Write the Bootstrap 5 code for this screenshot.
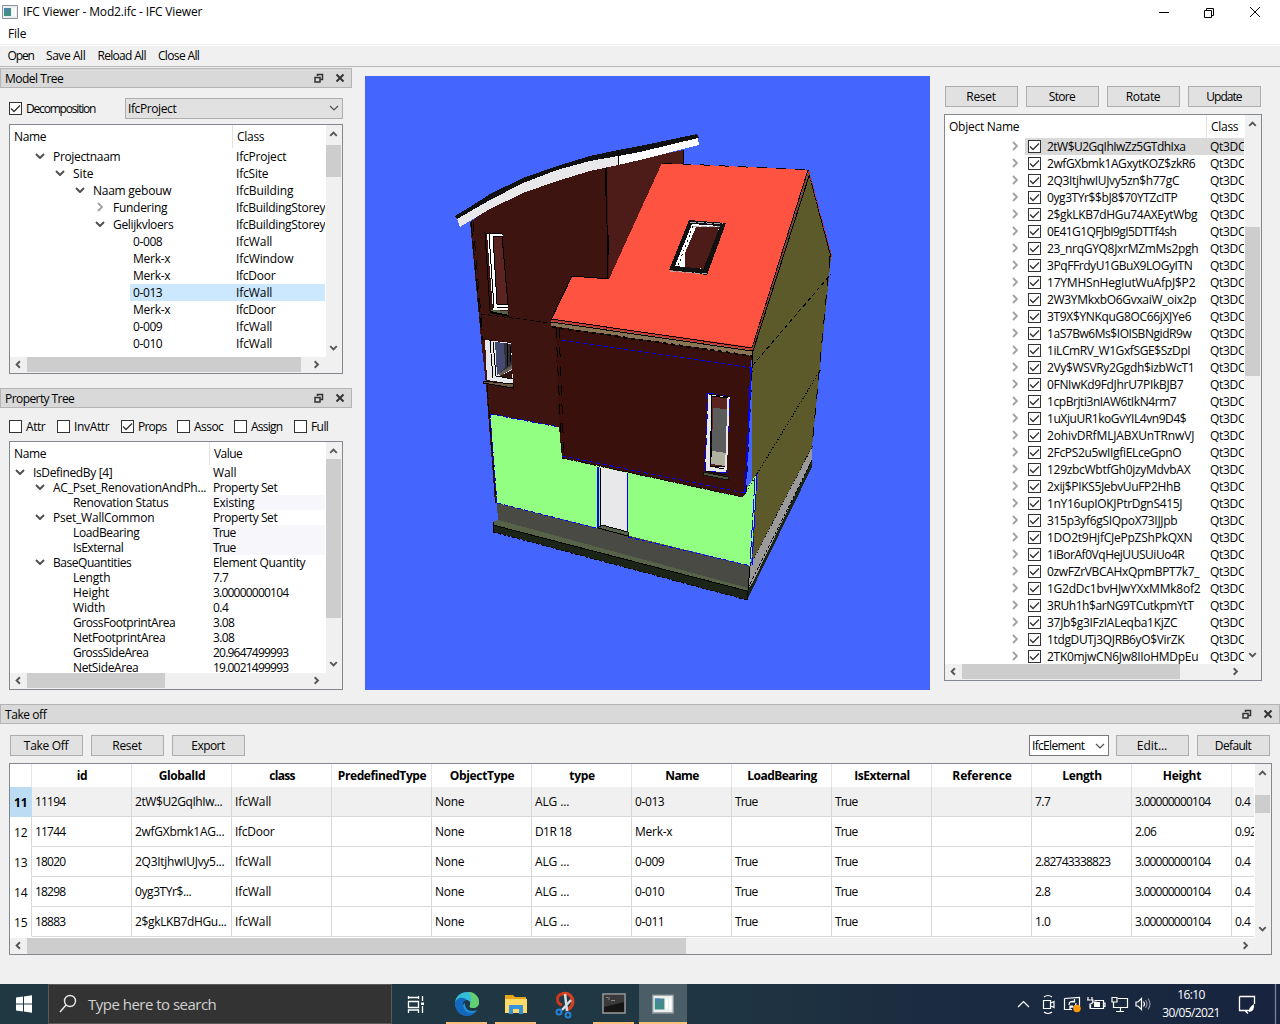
<!DOCTYPE html>
<html lang="en">
<head>
<meta charset="utf-8">
<title>IFC Viewer - Mod2.ifc - IFC Viewer</title>
<link href="https://cdn.jsdelivr.net/npm/bootstrap@5.3.0/dist/css/bootstrap.min.css" rel="stylesheet">
<style>
body{width:1280px;height:1024px;overflow:hidden;background:#f0f0f0;color:#000;font:12px/17px "Open Sans","Noto Sans",sans-serif;letter-spacing:-.2px}
svg{display:block;flex:none}
.titlebar{height:23px;background:#fff;padding:0 19px 0 2px}
.menubar{height:22px;background:#fff;border-bottom:1px solid #f0f0f0;box-shadow:0 1px #fff;padding:2px 8px}
.toolstrip{height:22px;border-bottom:1px solid #b8b8b8;padding-left:7.5px;gap:12.200px}
.work{height:637px}
.leftcol{width:352px}
.docktitle{height:20px;background:#d9d9d9;border:1px solid #b4b4b4;padding:0 6px 0 4px}
.checks{height:36px;padding-left:9px}
.tick{width:13px;height:13px;border:1px solid #333;background:#fff;flex:none}
.lbl{margin-left:4px}
.combo{border:1px solid #adadad;background:#e1e1e1;height:21px;padding:0 3px 0 2px}
.combo.light{background:#fff;border-color:#7a7a7a;width:80px;margin-right:-1px}
.frame{border:1px solid #828790;background:#fff;overflow:hidden}
.vbar,.hbar{background:#f0f0f0;flex:none}
.vbar{width:16px}
.hbar{height:16px}
.thumb{background:#cdcdcd;flex:none}
.arr{flex:none;width:17px;height:17px}
.vbar .arr{width:15px}
.hbar .arr{height:15px}
.r17{height:17px;line-height:17px;white-space:nowrap}
.r15{height:15px;line-height:15px;white-space:nowrap}
.hd{height:23px;line-height:23px}
.hd .c1{border-right:1px solid #e2e2e2;padding-left:4px}
.hd .c2{padding-left:4px}
.c1{flex:none;overflow:hidden}
.c2{flex:1 1 0;min-width:0;overflow:hidden;padding-left:3px;margin-right:1px;white-space:nowrap}
.tw1{width:223px}.tw2{width:200px}.tw3{width:262px}
.exp{width:20px;flex:none;display:flex;justify-content:center;padding:0 1px 1px 0}
.picked{background:#cce8ff}
.push{width:73px;height:21px;line-height:17px;padding:0 1px 0 0;border:1px solid #adadad;background:#e1e1e1;border-radius:0;font-size:12px;letter-spacing:-.2px;color:#000}
.push:hover{background:#e1e1e1}
.scene{width:565px;height:614px;margin:9px 0 0 13px}
.rightcol{width:318px;margin:0 18px 0 14px;padding-top:19px}
.grid-row{height:30px;line-height:30px;white-space:nowrap}
.grid-row>div{width:100px;flex:none;border-right:1px solid #d8d8d8;border-bottom:1px solid #d8d8d8;padding-left:3px;overflow:hidden}
.grid-row>div.num{width:22px;padding-left:4px;border-bottom-color:#fff;line-height:31px}
.grid-row.on>div{background:#f0f0f0}
.grid-row.on>div.num{background:#bcdcf4;border-color:#bcdcf4;font-weight:700}
.grid-row.top{height:23px;line-height:24px;font-weight:700;text-align:center}
.grid-row.top>div{border-bottom:0;padding:0 0 0 1px;border-color:#e5e5e5}
.taskbar{height:40px;background:linear-gradient(90deg,#1f3841,#203744 50%,#1a2b3f 75%,#18243f);color:#fff}
.seek{width:344px;height:40px;background:#333;border:1px solid #5a5a5a;color:#d0d0d0;font-size:15px;letter-spacing:0}
.app{height:40px;display:flex;justify-content:center;align-items:center;border-bottom:2px solid #fec07c;padding-top:2px;width:41px;margin-right:8px}
.clock{width:64px;font-size:12px;line-height:18px;text-align:center}
</style>
<script src="https://cdn.jsdelivr.net/npm/bootstrap@5.3.0/dist/js/bootstrap.bundle.min.js"></script>
</head>
<body class="d-flex flex-column">
<svg width="0" height="0" class="position-absolute">
 <defs>
 <symbol id="dn" viewBox="0 0 10 6"><path d="M1 1 5 5 9 1" fill="none" stroke="#505050" stroke-width="2"/></symbol>
 <symbol id="rt" viewBox="0 0 6 10"><path d="M1 1 5 5 1 9" fill="none" stroke="#a0a0a0" stroke-width="1.8"/></symbol>
 <symbol id="au" viewBox="0 0 16 17"><path d="M4.500 11 8 7.500 11.500 11" fill="none" stroke="#555" stroke-width="2"/></symbol>
 <symbol id="ad" viewBox="0 0 16 17"><path d="M4.500 6 8 9.500 11.500 6" fill="none" stroke="#555" stroke-width="2"/></symbol>
 <symbol id="al" viewBox="0 0 17 16"><path d="M10 4.500 6.500 8 10 11.500" fill="none" stroke="#555" stroke-width="2"/></symbol>
 <symbol id="ar" viewBox="0 0 17 16"><path d="M5.500 4.500 9 8 5.500 11.500" fill="none" stroke="#555" stroke-width="2"/></symbol>
 <symbol id="ck" viewBox="0 0 11 11"><path d="M1 5.500 4 8.500 10 2.500" fill="none" stroke="#333" stroke-width="1.300"/></symbol>
 <symbol id="cv" viewBox="0 0 10 6"><path d="M1 1 5 5 9 1" fill="none" stroke="#505050" stroke-width="1.200"/></symbol>
 <symbol id="wc" viewBox="0 0 31 10"><path d="M3.500 3V1.500H8.500V6.500H6M1 4.500H6V9H1ZM1 4.500H6" fill="none" stroke="#333" stroke-width="1.500"/><path d="M22.500 1.500 29.500 8.500M29.500 1.500 22.500 8.500" stroke="#333" stroke-width="2"/></symbol>
 <symbol id="app" viewBox="0 0 16 16"><path d="M.5 1.500H15.500V14.500H.5Z" fill="#eceeef" stroke="#8d9297"/><path d="M2 4H9V12H2Z" fill="#3f8f86"/><path d="M2 4H6V9Z" fill="#4f7fb5"/><path d="M10 4H11.500V12H10ZM12.500 4H14V12H12.500Z" fill="#fff"/></symbol>
 </defs>
</svg>

<header class="titlebar d-flex align-items-center">
 <svg width="16" height="16"><use href="#app"/></svg>
 <span class="me-auto" style="margin-left:5px" data-w="179">IFC Viewer - Mod2.ifc - IFC Viewer</span>
 <svg width="102" height="14" viewBox="0 3 102 14" fill="none" stroke="#000"><path d="M0 10.500H10M45.500 8.500H52.500V15.500H45.500ZM47.500 8.500V6.500H54.500V13.500H52.500M91 5 101 15M101 5 91 15"/></svg>
</header>
<nav class="menubar"><span data-w="18">File</span></nav>
<div class="toolstrip d-flex align-items-center"><span data-w="26">Open</span><span data-w="39">Save All</span><span data-w="48">Reload All</span><span data-w="41">Close All</span></div>

<main class="work d-flex align-items-start">
 <section class="leftcol">
  <div class="docktitle d-flex align-items-center justify-content-between" style="margin-top:1px"><span data-w="58">Model Tree</span><svg width="31" height="10"><use href="#wc"/></svg></div>
  <div class="checks d-flex align-items-center pt-1"><span class="tick"><svg width="11" height="11"><use href="#ck"/></svg></span><span class="lbl" data-w="69">Decomposition</span>
   <div class="combo d-flex align-items-center justify-content-between ms-auto" style="width:218px;margin-right:9px"><span data-w="48">IfcProject</span><svg width="10" height="6"><use href="#cv"/></svg></div></div>
  <div class="frame d-flex" id="modelTree" style="width:334px;height:250px;margin-left:9px"></div>
  <div class="docktitle d-flex align-items-center justify-content-between" style="margin-top:14px"><span data-w="69">Property Tree</span><svg width="31" height="10"><use href="#wc"/></svg></div>
  <div class="checks d-flex align-items-center" id="filters"></div>
  <div class="frame d-flex" id="propTree" style="width:334px;height:249px;margin:-3px 0 0 9px"></div>
 </section>

 <div class="scene">
 <svg width="565" height="614" viewBox="365 76 565 614" shape-rendering="crispEdges">
  <path fill="#4466ff" d="M365 76H930V690H365Z"/>
  <g id="walls">
  <path fill="#4d1c18" d="M605 166 683 150 684 164 662 164 609 280Z"/>
  <path fill="#3d1410" d="M470 222 490 208 523 192 557 180 590 171 607 167 609 280 556 325 562 458 559 427 490 414 497 503 495 503 486 385 481 339Z"/>
  <path fill="#5c5a2a" d="M808 172 831 257 812 447 752 563 752 350Z"/>
  <path fill="#92ff83" d="M490 414 559 427 562 457 741 497 757 473 751 566 497 503Z"/>
  <path fill="#3a100c" d="M555 324 752 353 751 368 745 494 742 497 562 458 559 427Z"/>
  <path fill="#ff5341" d="M662 163 808 170 752 350 551 320 572 276 609 279Z"/>
  <path fill="#c93430" d="M551 319 752 347V350L551 321Z"/>
  <path fill="#8b7355" d="M551 321 752 350V356L551 326Z"/>
  </g>
  <g id="eaves">
  <path fill="#101010" d="M455 216 470 207 490 194 523 178 557 166 590 156 618 150 640 146 697 134 699 138 640 153 618 158 590 163 557 172 523 185 490 201 458 220Z"/>
  <path fill="#e8e8ea" d="M457 219 490 200 523 183 557 170 590 161 618 156V165L590 171 557 181 523 193 490 209 470 221 460 227Z"/>
  <path fill="#fff" d="M618 156 640 152 698 138 699 145 640 160 618 165Z"/>
  </g>
  <g id="base">
  <path fill="#4a4a44" d="M497 503 750 566 748 590 498 523Z"/>
  <path fill="#566348" d="M493 522 498 520 748 588 747 592 493 525Z"/>
  <path fill="#1c2418" d="M493 525 747 591 812 460V467L747 600 494 532Z"/>
  <path fill="#9a9a9a" d="M750 567 753 560 812 447V460L753 582 749 588Z"/>
  </g>
  <g id="edges" fill="none" stroke="#000">
  <path d="M606 168 608 279M683 150 684 163M572 276 609 279M572 276 551 320M551 322 752 351M551 319 752 348M808 170 752 348M810 173 753 351M808 170 831 257M618 150V165M493 525 747 591V600M750 567 748 590M752 348V360M493 522V532M830 256 829 268M753 352 752 368"/>
  <path d="M606 168V196M608 235V255" stroke-width="1.500"/>
  <path stroke-dasharray="10 9" d="M662 163 808 170M473 222 483 339M556 328 562 458M559 328 564 458M753 352 746 493M830 257 812 447"/>
  <path stroke="#3d1410" stroke-width="2" d="M488 400 496 502"/>
  <path stroke-dasharray="14 5" d="M487 385 496 503M471 222 482 339"/>
  <path stroke-dasharray="4 4" stroke-width="2" d="M552 327 752 356"/>
  <path stroke-dasharray="3 1" d="M562 458 742 497"/>
  <path stroke-dasharray="3 2" d="M493 532 747 600M812 460 748 588"/>
  <path stroke-dasharray="1 2" d="M750 566 812 447"/>
  <path stroke-dasharray="4 3" d="M481 314 551 323M481 339 511 343M753 365 831 274"/>
  <path stroke-dasharray="1 2" d="M745 494 820 370" stroke-width="1.400"/>
  <path stroke="#b52c2a" d="M809 171 752 350M809 172 832 257" stroke-dasharray="3 2"/>
  <path stroke="#00f" stroke-dasharray="4 3" d="M490 414 559 427M490 414 497 503M497 503 600 529M628 537 751 566M562 340 752 368M562 456 745 493"/>
  <path stroke="#00f" stroke-width="1.500" d="M751 368 748 440 745 493M627 473V531M598 467V528"/><path stroke="#00f" stroke-dasharray="18 3" d="M757 473 752 565M755 478 750 565"/>
  </g>
  <g id="windows">
  <path fill="#3d1410" stroke="#000" d="M485 233 502 234 508 312 490 311Z"/><path fill="#fff" d="M487 234 502 234 503 236 493 236 497 304 508 304V310L493 310Z"/><path fill="#5c2420" stroke="#000" d="M493 236 502 236 508 304 497 304Z"/><path stroke="#000" d="M489 234 494 308M497 307H508"/><path fill="#566348" d="M491 310 508 311V315L490 312Z"/><path stroke="#000" stroke-width="2" d="M490 312 509 316"/>
  <path fill="#e8e8ea" d="M485 340 511 343 513 384 487 380Z"/><path fill="#454a70" d="M495 342 505 343 505 368 497 375Z"/><path fill="#303036" d="M504 343 511 344 512 366 498 374 505 367Z"/><path fill="#655b56" d="M498 374 512 365V369L500 376Z"/><path fill="#301414" d="M500 376 512 370V379Z"/><path d="M493 342 496 376 513 379M490 341 493 378M507 344 508 366M510 346 511 362" fill="none" stroke="#000"/><path fill="#6f5a45" stroke="#000" d="M483 381 513 384V388L483 383Z"/>
  <path fill="#111" d="M689 220 726 223 707 275 669 270Z"/><path fill="#fff" d="M692 224 720 226 705 269 675 266Z"/><path fill="#4d1c18" d="M696 227 719 227 706 269 685 267 685 253Z"/><path fill="none" stroke="#aaa" stroke-dasharray="6 2" d="M690 222 723 224M670 271 707 274M693 226 720 227"/><path stroke="#111" stroke-dasharray="2 3" d="M693 226 678 266"/><path stroke="#111" stroke-width="3" d="M722 225 705 269"/>
  <path fill="#e8e8ea" stroke="#00f" stroke-dasharray="9 3" d="M708 393 730 397 726 473 705 471Z"/><path fill="#5c2420" stroke="#000" d="M712 396 728 398 726 467 711 466Z"/><path fill="#5c5c5c" d="M713 408 727 409 726 453 712 451Z"/><path fill="#b0b0a0" d="M712 451 726 453 725 466 711 464Z"/><path stroke="#e8e8ea" stroke-width="2" d="M728.500 398 726 470"/><path fill="none" stroke="#000" d="M709 394 730 397M712 397 710 466M710 466 724 469M706 471 726 475"/><path fill="#4c563f" stroke="#111" d="M703 472 728 477 728 480 703 475Z"/>
  <path fill="#e8e8ea" d="M600 467 627 473V531L601 525Z"/><path stroke="#000" d="M600 467 601 526"/><path fill="none" stroke="#92ff83" d="M599 467V526"/><path fill="#566348" stroke="#000" d="M598 528 602 525 628 532V536Z"/>
  </g>
 </svg>
 </div>

 <aside class="rightcol">
  <div class="d-flex" style="gap:8px;padding-left:1px" id="sceneBtns"></div>
  <div class="frame d-flex" id="objTree" style="height:567px;margin-top:7px"></div>
 </aside>
</main>

<section>
 <div class="docktitle d-flex align-items-center justify-content-between"><span data-w="41">Take off</span><svg width="31" height="10"><use href="#wc"/></svg></div>
 <div class="d-flex align-items-center" style="gap:8px;padding:11px 10px 7px">
  <button class="btn push"><span data-w="44">Take Off</span></button><button class="btn push"><span data-w="29">Reset</span></button><button class="btn push me-auto"><span data-w="33">Export</span></button>
  <div class="combo light d-flex align-items-center justify-content-between"><span data-w="52">IfcElement</span><svg width="10" height="6"><use href="#cv"/></svg></div>
  <button class="btn push"><span data-w="30">Edit...</span></button><button class="btn push"><span data-w="36">Default</span></button>
 </div>
 <div class="frame" style="height:192px;margin:0 8px 0 9px">
  <div class="d-flex" style="height:174px"><div class="flex-fill overflow-hidden" style="width:0;margin-right:1px" id="takeoff"></div>
   <div class="vbar d-flex flex-column"><svg class="arr"><use href="#au"/></svg><div class="thumb" style="margin-top:14px;height:18px;width:15px"></div><svg class="arr mt-auto"><use href="#ad"/></svg></div></div>
  <div class="hbar d-flex"><svg class="arr"><use href="#al"/></svg><div class="thumb" style="width:659px"></div><svg class="arr ms-auto me-3"><use href="#ar"/></svg></div>
 </div>
</section>

<footer class="taskbar d-flex align-items-center mt-auto">
 <svg width="48" height="40" fill="#fff"><path d="M16 13.500 23 12.500V19.500H16ZM24 12.400 32 11.200V19.500H24ZM16 20.500H23V27.500L16 26.500ZM24 20.500H32V28.800L24 27.600Z"/></svg>
 <div class="seek d-flex align-items-center"><svg width="39" height="38" fill="none" stroke="#e8e8e8" stroke-width="1.400"><circle cx="21" cy="16" r="5.500"/><path d="M17 20 11 27"/></svg><span data-w="128">Type here to search</span></div>
 <svg width="54" height="40" fill="none" stroke="#fff" stroke-width="1.300"><path d="M16.500 12V15M26.500 12V15M16.500 13.500H26.500M16.500 17.500H26.500V23.500H16.500ZM16.500 29V26H26.500V29M30.500 12V17M30.500 22V29"/><path d="M29 18.500H32V21H29Z" fill="#fff" stroke="none"/></svg>
 <div class="app"><svg width="26" height="26" viewBox="0 0 26 26"><path d="M1 13C1 5 7 1 13 1c8 0 12 5 12 10 0 4-3 6-6 6-3 0-4-1-3-3 1-3-1-5-4-5-5 0-8 4-7 9-3-1-4-3-4-5Z" fill="#35bdd7"/><path d="M14 1c7 0 11 5 11 10 0 4-3 6-6 6-3 0-4-1-3-3 2-5 2-9-2-13Z" fill="#64cf70"/><path d="M1 12c1-5 8-7 12-3-6 0-5 10 1 12 3 1 6 0 8-1-2 4-6 5-9 5C6 25 1 20 1 12Z" fill="#1269bd"/><path d="M9 14c0 5 4 8 9 8 2 0 4-1 5-3-6 2-12 1-12-7Z" fill="#1d8edb"/></svg></div>
 <div class="app"><svg width="24" height="24"><path d="M1 3H9L11 5H22V21H1Z" fill="#e7a51b"/><path d="M1 7H23V21H1Z" fill="#ffd968"/><path d="M5 22V13H19V22H15V17H9V22Z" fill="#3593dd"/></svg></div>
 <div class="app border-0"><svg width="24" height="28" viewBox="0 0 24 28"><path d="M9 3C3 4 3 12 9 14" fill="none" stroke="#c9371d" stroke-width="3"/><path d="M9 3C20 0 24 14 14 19" fill="none" stroke="#d8401f" stroke-width="3.500"/><path d="M12 3 14 20M18 9 9 19" stroke="#d6dbe0" stroke-width="2.500"/><circle cx="6" cy="21" r="2.500" fill="none" stroke="#2384d4" stroke-width="2"/><circle cx="15" cy="24" r="2.500" fill="none" stroke="#2384d4" stroke-width="2"/></svg></div>
 <div class="app"><svg width="24" height="22"><path d="M1 1H23V20H1Z" fill="#151515" stroke="#9a9a9a" stroke-width="1.500"/><path d="M2 2H22V9L2 14Z" fill="#3a3a3a"/><path d="M4 4.500H6M7 4V7M9 7.500H13" stroke="#888"/></svg></div>
 <div class="app" style="background:#4b5e68;width:48px;margin-left:-3px"><svg width="22" height="20" viewBox="0 1 16 14"><use href="#app" width="16" height="16"/></svg></div>
 <svg class="ms-auto" width="150" height="40" fill="none" stroke="#fff" stroke-width="1.200"><path d="M9 23 14.500 17.500 20 23M34.500 16.500H41.500V24.500H34.500ZM42 19 45 17.500V23.500L42 22M35 13Q39 10 43 13M35 28Q39 31 43 28M55.500 14.500 70.500 13.500V22M55.500 14.500V25.500H63M60 21Q60 16.500 65.500 17.500M65.500 15V18H62.500M67 19Q67 24 61 23M61 25V22H64M85.500 16.500H94.500V24.500H81.500V21M94.500 19H96V22.500H94.500M79 13V16M83 13V16M78 16H84Q84 20 81 20V24.500M87 23V18H84M103 13.500H108V18H103ZM109 14.500H118.500V23.500H104.500V18M111.500 24V27M107 27.500H115M127 18H129L132.500 14.500V25.500L129 22H127ZM134.500 17.500Q136.500 20 134.500 22.500"/><path d="M136.500 16Q139.500 20 136.500 24M139 14.500Q143 20 139 25.500" stroke="#8993a2"/><circle cx="68" cy="24.500" r="3.700" fill="#ff9800" stroke="none"/><path d="M85 18H91V23H85Z" fill="#fff" stroke="none"/></svg>
 <div class="clock"><div><span data-w="27">16:10</span></div><div><span data-w="57">30/05/2021</span></div></div>
 <svg width="57" height="40" viewBox="3 0 57 40" fill="none" stroke="#fff" stroke-width="1.300"><path d="M19.500 12.500H34.500V20M19.500 12.500V26.500H25L28 29.500M29 26.500H25"/><path d="M29 28Q35 27 34 20Q28 24 29 28Z" fill="#fff" stroke="none"/><path d="M55.500 0V40" stroke="#7a8494"/></svg>
</footer>

<script>
const span = (t, w) => `<span${w ? ` data-w="${w}"` : ''}>${t}</span>`;
const icon = (n, w, h) => `<svg width="${w}" height="${h}"><use href="#${n}"/></svg>`;
const box = on => `<span class="tick">${on ? icon('ck', 11, 11) : ''}</span>`;
const toggle = s => s === 'v' ? icon('dn', 10, 6) : s === '>' ? icon('rt', 6, 10) : '';

/* Scroll frame: body on the left, vertical bar, horizontal bar below */
function pane(id, body, o) {
  document.getElementById(id).innerHTML =
   `<div class="d-flex flex-column flex-fill" style="min-width:0">
     <div class="d-flex" style="height:${o.h}px"><div class="flex-fill overflow-hidden" style="width:0">${body}</div>
      <div class="vbar d-flex flex-column"><svg class="arr"><use href="#au"/></svg><div class="thumb" style="width:15px;margin-top:${o.top}px;height:${o.th}px"></div><svg class="arr mt-auto"><use href="#ad"/></svg></div></div>
     <div class="hbar flex-fill d-flex"><svg class="arr"><use href="#al"/></svg><div class="thumb" style="width:${o.tw}px;height:15px"></div><svg class="arr ms-auto me-3"><use href="#ar"/></svg></div></div>`;
}
const tree = (rows, rh, cw) => rows.map(([lv, s, n, nw, v, vw, hl]) => {
  const pad = 20 * lv;
  return `<div class="d-flex ${rh}"><div class="c1 ${cw} d-flex align-items-center" style="padding-left:${pad}px"><span class="exp">${toggle(s)}</span><span class="flex-fill ${hl === 1 ? 'picked' : ''}" style="padding-left:3px">${span(n, nw)}</span></div><div class="c2 ${hl === 1 ? 'picked' : ''}" ${hl === 2 ? 'style="background:#f6f6fb"' : ''}>${span(v, vw)}</div></div>`;
}).join('');
const head = (cw, a, aw, b, bw) => `<div class="d-flex hd"><div class="c1 ${cw}">${span(a, aw)}</div><div class="c2">${span(b, bw)}</div></div>`;

pane('modelTree', head('tw1', 'Name', 32, 'Class', 27) + tree([
 [1,'v','Projectnaam',67,'IfcProject',50],[2,'v','Site',20,'IfcSite',32],[3,'v','Naam gebouw',78,'IfcBuilding',57],
 [4,'>','Fundering',54,'IfcBuildingStorey',89],[4,'v','Gelijkvloers',60,'IfcBuildingStorey',89],
 [5,'','0-008',29,'IfcWall',36],[5,'','Merk-x',37,'IfcWindow',57],[5,'','Merk-x',37,'IfcDoor',39],[5,'','0-013',29,'IfcWall',36,1],
 [5,'','Merk-x',37,'IfcDoor',39],[5,'','0-009',29,'IfcWall',36],[5,'','0-010',29,'IfcWall',36]
], 'r17', 'tw1'), {h:232, top:3, th:32, tw:274});

pane('propTree', head('tw2', 'Name', 32, 'Value', 28) + tree([
 [0,'v','IsDefinedBy [4]',79,'Wall',23],[1,'v','AC_Pset_RenovationAndPh...',153,'Property Set',64],[2,'','Renovation Status',95,'Existing',41,2],
 [1,'v','Pset_WallCommon',101,'Property Set',64],[2,'','LoadBearing',66,'True',22,2],[2,'','IsExternal',50,'True',22,2],
 [1,'v','BaseQuantities',78,'Element Quantity',92],[2,'','Length',37,'7.7',15],[2,'','Height',36,'3.00000000104',75],[2,'','Width',32,'0.4',15],
 [2,'','GrossFootprintArea',102,'3.08',21],[2,'','NetFootprintArea',92,'3.08',21],[2,'','GrossSideArea',75,'20.9647499993',75],[2,'','NetSideArea',65,'19.0021499993',75]
], 'r15', 'tw2'), {h:231, top:0, th:159, tw:138});

const guids = [['2tW$U2GqIhIwZz5GTdhIxa',138],['2wfGXbmk1AGxytKOZ$zkR6',148],['2Q3ItjhwIUJvy5zn$h77gC',132],['0yg3TYr$$bJ8$70YTZcITP',130],['2$gkLKB7dHGu74AXEytWbg',150],['0E41G1QFJbI9gI5DTTf4sh',129],['23_nrqGYQ8JxrMZmMs2pgh',151],['3PqFFrdyU1GBuX9LOGyITN',145],['17YMHSnHegIutWuAfpJ$P2',148],['2W3YMkxbO6GvxaiW_oix2p',149],['3T9X$YNKquG8OC66jXJYe6',144],['1aS7Bw6Ms$IOISBNgidR9w',144],['1iLCmRV_W1GxfSGE$SzDpI',143],['2Vy$WSVRy2Ggdh$izbWcT1',147],['0FNIwKd9FdJhrU7PIkBJB7',136],['1cpBrjti3nIAW6tIkN4rm7',129],['1uXjuUR1koGvYIL4vn9D4$',139],['2ohivDRfMLJABXUnTRnwVJ',147],['2FcPS2u5wIIgfiELceGpnO',134],['129zbcWbtfGh0jzyMdvbAX',143],['2xij$PIKS5JebvUuFP2HhB',133],['1nY16upIOKJPtrDgnS415J',135],['315p3yf6gSIQpoX73IJJpb',130],['1DO2t9HjfCJePpZShPkQXN',145],['1iBorAf0VqHejUUSUiUo4R',137],['0zwFZrVBCAHxQpmBPT7k7_',152],['1G2dDc1bvHJwYXxMMk8of2',153],['3RUh1h$arNG9TCutkpmYtT',146],['37Jb$g3IFzIALeqba1KjZC',130],['1tdgDUTj3QJRB6yO$VirZK',137],['2TK0mjwCN6Jw8IIoHMDpEu',151]];
pane('objTree', head('tw3', 'Object Name', 70, 'Class', 27) + guids.map(([g, w], i) => {
  const bg = i ? '' : 'style="background:#d9d9d9"';
  return `<div class="d-flex r17"><div class="c1 tw3 d-flex" style="padding-left:60px"><span class="exp align-items-center">${toggle('>')}</span><span class="flex-fill d-flex align-items-center" style="padding-left:3px;${i ? '' : 'background:#d9d9d9'}">${box(1)}<span style="padding-left:6px">${span(g, w)}</span></span></div><div class="c2" ${bg}>${span('Qt3DC', 35)}</div></div>`;
}).join(''), {h:549, top:95, th:149, tw:218});

document.getElementById('filters').innerHTML = [['Attr',0,19,48],['InvAttr',0,35,64],['Props',1,28,56],['Assoc',0,29,57],['Assign',0,31,60],['Full',0,17,40]]
 .map(([t, on, w, c]) => `<div class="d-flex align-items-center" style="width:${c}px">${box(on)}<span class="lbl">${span(t, w)}</span></div>`).join('');
document.getElementById('sceneBtns').innerHTML = [['Reset',29],['Store',26],['Rotate',34],['Update',35]].map(([t, w]) => `<button class="btn push">${span(t, w)}</button>`).join('');

const cols = [['id',10],['GlobalId',46],['class',25],['PredefinedType',88],['ObjectType',64],['type',25],['Name',33],['LoadBearing',69],['IsExternal',55],['Reference',59],['Length',39],['Height',38],['',0]];
const recs = [
 [11,'11194','2tW$U2GqIhIw...',87,'IfcWall','ALG ...','0-013','True','7.7','3.00000000104','0.4'],
 [12,'11744','2wfGXbmk1AG...',89,'IfcDoor','D1R 18','Merk-x','','','2.06','0.92'],
 [13,'18020','2Q3ItjhwIUJvy5...',89,'IfcWall','ALG ...','0-009','True','2.82743338823','3.00000000104','0.4'],
 [14,'18298','0yg3TYr$...',56,'IfcWall','ALG ...','0-010','True','2.8','3.00000000104','0.4'],
 [15,'18883','2$gkLKB7dHGu...',91,'IfcWall','ALG ...','0-011','True','1.0','3.00000000104','0.4']];
const known = {'3.00000000104':75,'2.82743338823':75,'IfcWall':36,'IfcDoor':39,'True':22,'ALG ...':34,'D1R 18':36,'Merk-x':37,'7.7':15,'2.8':15,'1.0':15,'0.4':15,'0.92':21,'2.06':21,'None':29};
document.getElementById('takeoff').innerHTML =
 `<div class="d-flex grid-row top"><div class="num"></div>${cols.map(([t, w]) => `<div>${span(t, w)}</div>`).join('')}</div>` +
 recs.map((r, i) => {
  const cells = [[r[1],30],[r[2],r[3]],[r[4]],[''],['None'],[r[5]],[r[6],known[r[6]] || 29],[r[7]],['True'],[''],[r[8]],[r[9]],[r[10]]];
  return `<div class="d-flex grid-row ${i ? '' : 'on'}"><div class="num">${span(r[0], 13)}</div>${cells.map(([t, w]) => `<div>${span(t, w || known[t])}</div>`).join('')}</div>`;
 }).join('');

document.querySelectorAll('[data-w]').forEach(el => {
  const n = el.textContent.length;
  el.style.letterSpacing = '0px';
  const w = el.getBoundingClientRect().width;
  el.style.letterSpacing = ((+el.dataset.w + 0.3 - w) / n).toFixed(3) + 'px';
});
</script>
</body>
</html>
